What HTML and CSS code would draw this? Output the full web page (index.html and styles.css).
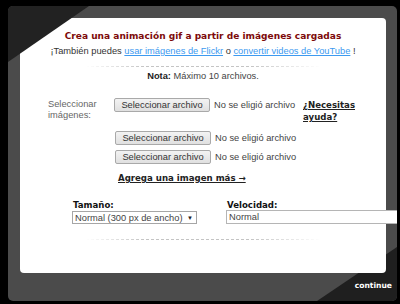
FILE: index.html
```html
<!DOCTYPE html>
<html lang="es">
<head>
<meta charset="utf-8">
<link rel="stylesheet" href="styles.css">
</head>
<body>
<div class="frame">
  <div class="corner-tl"></div>
  <div class="panel">
    <h1 class="title">Crea una animación gif a partir de imágenes cargadas</h1>
    <p class="sub">¡También puedes <a href="#">usar imágenes de Flickr</a> o <a href="#">convertir videos de YouTube</a> !</p>
    <div class="sep"></div>
    <p class="nota"><b>Nota:</b> Máximo 10 archivos.</p>
    <div class="uploads">
      <div class="lbl">Seleccionar<br>imágenes:</div>
      <div class="files">
        <div class="file first"><button class="btn">Seleccionar archivo</button><span class="none">No se eligió archivo</span></div>
        <div class="file"><button class="btn">Seleccionar archivo</button><span class="none">No se eligió archivo</span></div>
        <div class="file"><button class="btn">Seleccionar archivo</button><span class="none">No se eligió archivo</span></div>
        <a class="more" href="#">Agrega una imagen más →</a>
      </div>
      <a class="help" href="#">¿Necesitas<br>ayuda?</a>
    </div>
    <div class="opts">
      <div class="opt size">
        <div class="olbl">Tamaño:</div>
        <div class="select"><span class="val">Normal (300 px de ancho)</span><span class="arrow">▼</span></div>
      </div>
      <div class="opt speed">
        <div class="olbl">Velocidad:</div>
        <input class="field" type="text" value="Normal">
      </div>
    </div>
    <div class="sep sep2"></div>
  </div>
  <div class="foot">continue</div>
  <div class="corner-br"></div>
</div>
</body>
</html>
```

FILE: styles.css
```css
html, body {
  margin: 0;
  padding: 0;
  background: #000;
  width: 400px;
  height: 304px;
  overflow: hidden;
  font-family: "Liberation Sans", Arial, sans-serif;
}

.frame {
  position: relative;
  margin: 6px 0 0 8px;
  width: 389px;
  height: 295px;
  box-sizing: border-box;
  padding: 12px 11px 0 12px;
  background: #4b4b4b;
  border-radius: 5px;
  overflow: hidden;
  display: flex;
  flex-direction: column;
}

.corner-tl {
  position: absolute;
  left: 0;
  top: 0;
  width: 81px;
  height: 56px;
  background: #222;
  clip-path: polygon(0 0, 100% 0, 0 100%);
  z-index: 3;
}

.corner-br {
  position: absolute;
  right: 0;
  bottom: 0;
  width: 80px;
  height: 54px;
  background: #1f1f1f;
  clip-path: polygon(100% 0, 100% 100%, 0 100%);
  z-index: 0;
}

.panel {
  position: relative;
  z-index: 1;
  height: 255px;
  flex: none;
  background: #fff;
  border-radius: 4px;
  padding-top: 11px;
  box-sizing: border-box;
  color: #333;
}

.title {
  margin: 0;
  text-align: center;
  font-family: "DejaVu Sans", Verdana, sans-serif;
  font-weight: bold;
  font-size: 9.05px;
  line-height: 14px;
  color: #7d0a0a;
}

.sub {
  margin: 2px 0 0;
  text-align: center;
  font-size: 9.3px;
  line-height: 12px;
  color: #333;
}

.sub a {
  color: #3d9af0;
  text-decoration: underline;
}

.sep {
  width: 235px;
  height: 1px;
  margin: 9px auto 0;
  background: repeating-linear-gradient(90deg, #c4c4c4 0 3px, transparent 3px 5px);
  -webkit-mask-image: linear-gradient(90deg, transparent 0, #000 25%, #000 70%, transparent 100%);
  mask-image: linear-gradient(90deg, transparent 0, #000 25%, #000 70%, transparent 100%);
}

.nota {
  margin: 3px 0 0;
  text-align: center;
  font-size: 9.3px;
  line-height: 12px;
  color: #444;
}

.nota b {
  font-weight: bold;
  color: #222;
}

.uploads {
  margin-top: 16px;
  padding-left: 28px;
  display: grid;
  grid-template-columns: 65px 190px auto;
  align-items: start;
}

.lbl {
  padding-top: 1px;
  font-size: 9.3px;
  line-height: 11px;
  color: #666;
}

.files {
  display: flex;
  flex-direction: column;
  align-items: flex-start;
}

.file {
  display: flex;
  align-items: center;
  gap: 4px;
  margin-left: 2px;
  margin-bottom: 5px;
}

.file.first {
  margin-left: 1px;
  margin-bottom: 19px;
}

.btn {
  width: 96px;
  height: 14px;
  padding: 0;
  margin: 0;
  box-sizing: border-box;
  border: 1px solid #a9a9a9;
  border-radius: 2px;
  background: linear-gradient(#f3f3f3, #e0e0e0);
  font-family: "Liberation Sans", Arial, sans-serif;
  font-size: 9.3px;
  line-height: 12px;
  color: #333;
}

.none {
  font-size: 9.3px;
  line-height: 12px;
  color: #444;
}

.more {
  margin: 3px 0 0 5px;
  font-family: "DejaVu Sans", Verdana, sans-serif;
  font-weight: bold;
  font-size: 8.6px;
  line-height: 12px;
  color: #222;
  text-decoration: underline;
}

.help {
  padding-top: 1px;
  font-family: "DejaVu Sans", Verdana, sans-serif;
  font-weight: bold;
  font-size: 8.6px;
  line-height: 12px;
  color: #222;
  text-decoration: underline;
}

.opts {
  margin-top: 15px;
  padding-left: 52px;
  display: flex;
}

.opt.size {
  flex: none;
  width: 154px;
}

.opt.speed {
  flex: none;
  width: 173px;
}

.olbl {
  font-family: "DejaVu Sans", Verdana, sans-serif;
  font-weight: bold;
  font-size: 8.6px;
  line-height: 12px;
  color: #111;
  padding-left: 1px;
}

.select {
  width: 125px;
  height: 13px;
  box-sizing: border-box;
  border: 1px solid #a6a6a6;
  display: flex;
  align-items: center;
  justify-content: space-between;
  padding: 0 3px 0 2px;
  font-size: 9.3px;
  color: #444;
  background: #fff;
}

.arrow {
  font-size: 6px;
  color: #222;
}

.field {
  display: block;
  width: 173px;
  height: 14px;
  margin: -1px 0 0;
  box-sizing: border-box;
  border: 1px solid #b5b5b5;
  padding: 0 2px;
  font-family: "Liberation Sans", Arial, sans-serif;
  font-size: 9.3px;
  color: #444;
  background: #fff;
}

.sep2 {
  margin-top: 15px;
}

.foot {
  position: relative;
  z-index: 2;
  flex: 1;
  margin-right: -6px;
  padding-bottom: 4px;
  display: flex;
  align-items: center;
  justify-content: flex-end;
  font-family: "DejaVu Sans", Verdana, sans-serif;
  font-weight: bold;
  font-size: 7.6px;
  color: #fff;
}
```
